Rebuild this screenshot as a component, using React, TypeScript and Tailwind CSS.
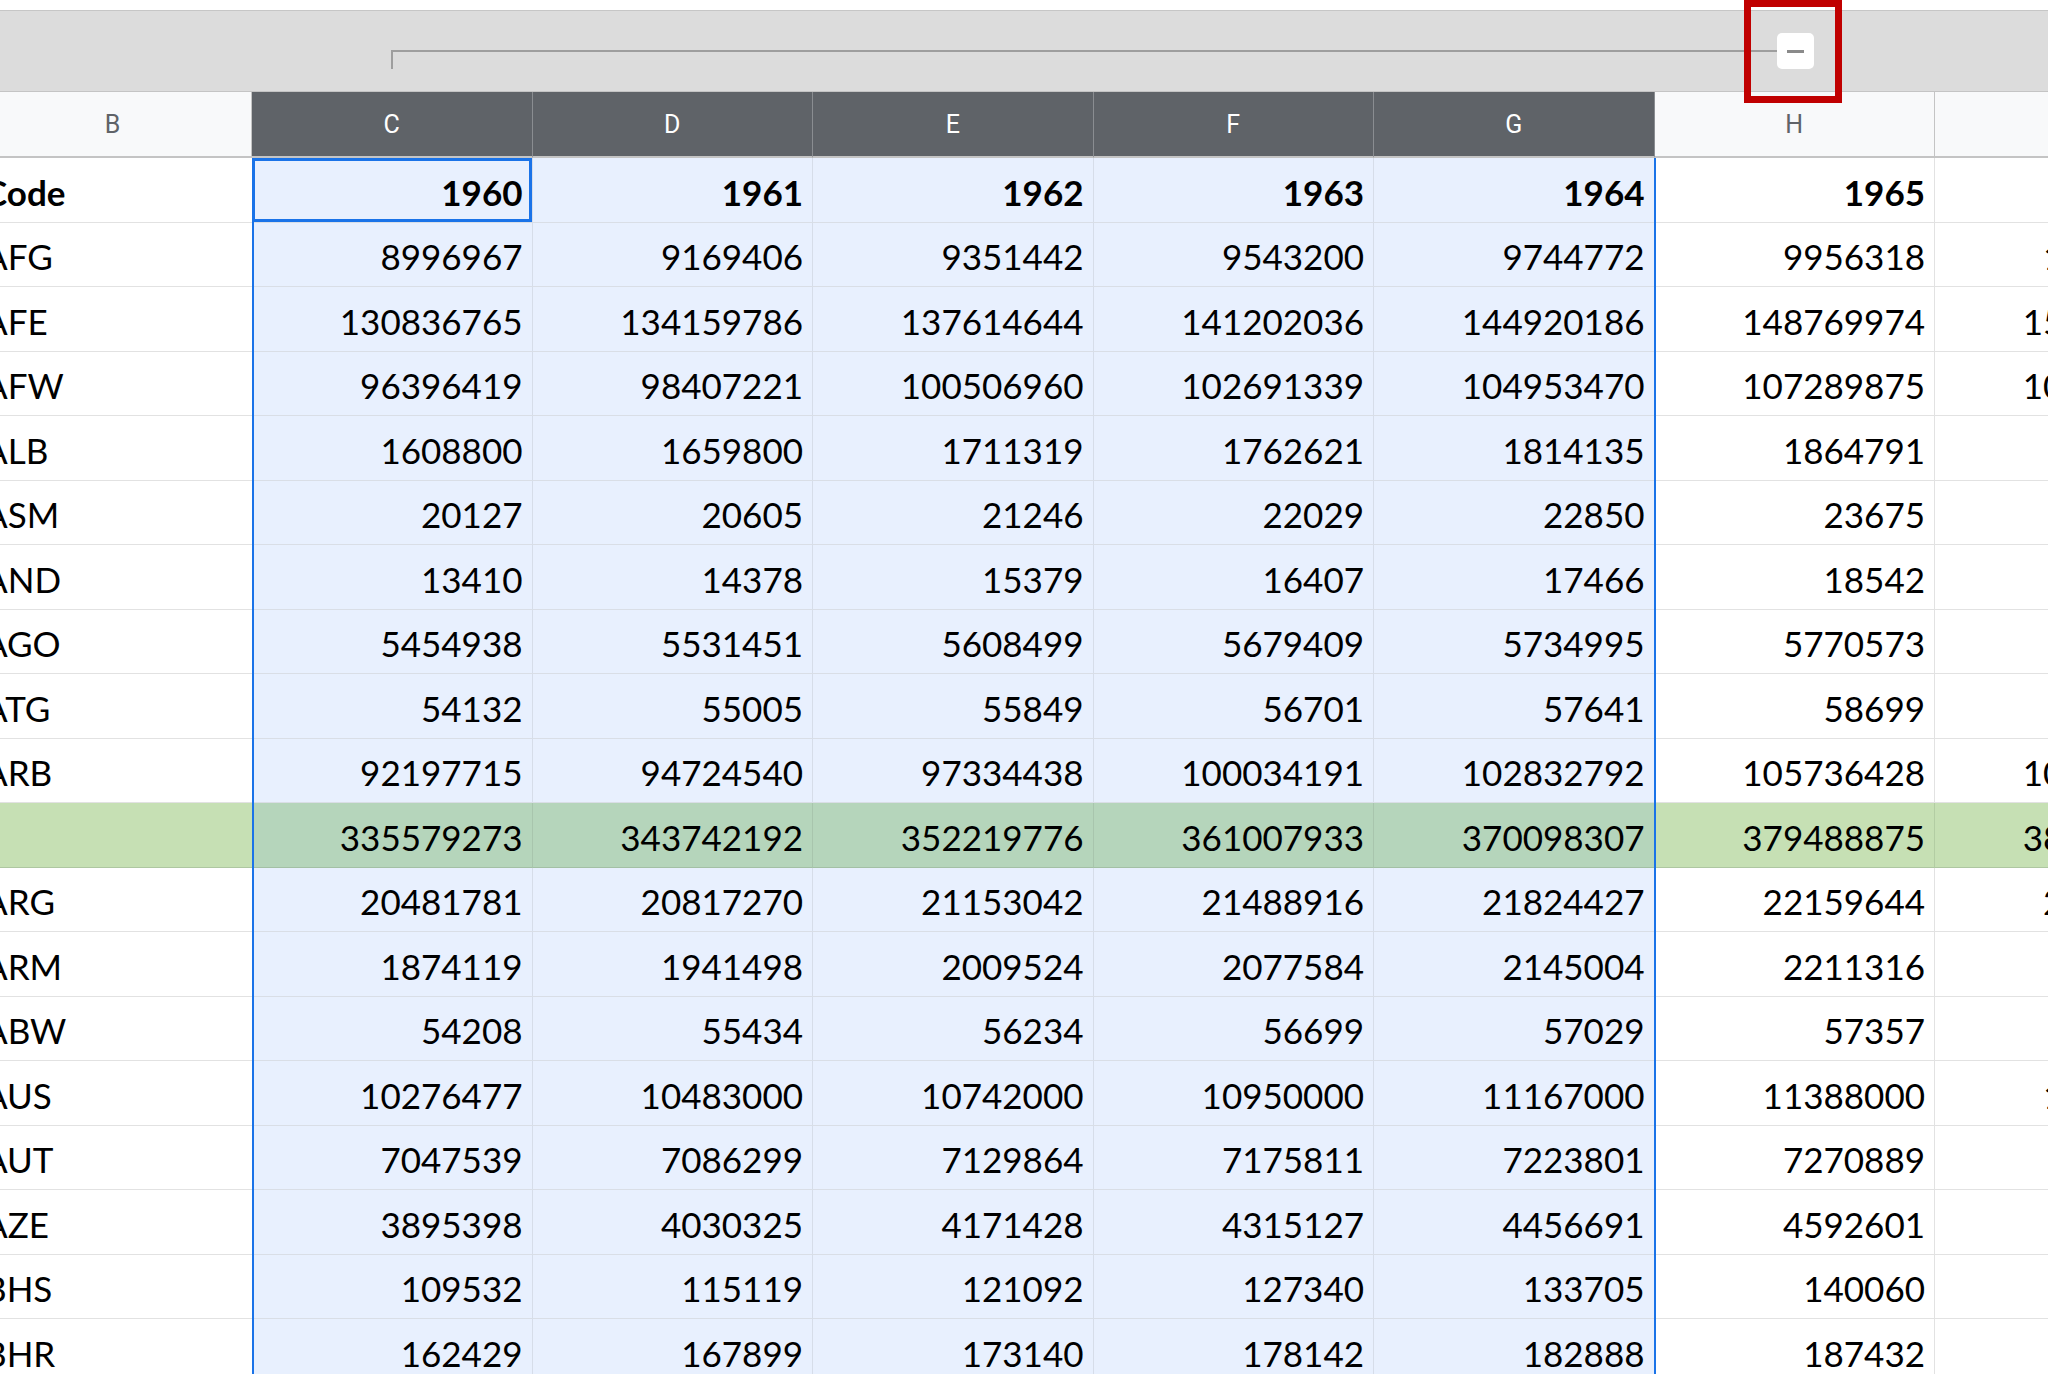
import React from "react";

type RowData = { code: string; vals: string[]; bold?: boolean; green?: boolean };

const rows: RowData[] = [
  { code: "Code", vals: ["1960", "1961", "1962", "1963", "1964", "1965", "1966"], bold: true },
  { code: "AFG", vals: ["8996967", "9169406", "9351442", "9543200", "9744772", "9956318", "10174840"] },
  { code: "AFE", vals: ["130836765", "134159786", "137614644", "141202036", "144920186", "148769974", "152752669"] },
  { code: "AFW", vals: ["96396419", "98407221", "100506960", "102691339", "104953470", "107289875", "109701811"] },
  { code: "ALB", vals: ["1608800", "1659800", "1711319", "1762621", "1814135", "1864791", "1914573"] },
  { code: "ASM", vals: ["20127", "20605", "21246", "22029", "22850", "23675", "24473"] },
  { code: "AND", vals: ["13410", "14378", "15379", "16407", "17466", "18542", "19646"] },
  { code: "AGO", vals: ["5454938", "5531451", "5608499", "5679409", "5734995", "5770573", "5781305"] },
  { code: "ATG", vals: ["54132", "55005", "55849", "56701", "57641", "58699", "59767"] },
  { code: "ARB", vals: ["92197715", "94724540", "97334438", "100034191", "102832792", "105736428", "108758606"] },
  { code: "", vals: ["335579273", "343742192", "352219776", "361007933", "370098307", "379488875", "388939121"], green: true },
  { code: "ARG", vals: ["20481781", "20817270", "21153042", "21488916", "21824427", "22159644", "22494254"] },
  { code: "ARM", vals: ["1874119", "1941498", "2009524", "2077584", "2145004", "2211316", "2276038"] },
  { code: "ABW", vals: ["54208", "55434", "56234", "56699", "57029", "57357", "57470"] },
  { code: "AUS", vals: ["10276477", "10483000", "10742000", "10950000", "11167000", "11388000", "11651000"] },
  { code: "AUT", vals: ["7047539", "7086299", "7129864", "7175811", "7223801", "7270889", "7322066"] },
  { code: "AZE", vals: ["3895398", "4030325", "4171428", "4315127", "4456691", "4592601", "4731058"] },
  { code: "BHS", vals: ["109532", "115119", "121092", "127340", "133705", "140060", "146428"] },
  { code: "BHR", vals: ["162429", "167899", "173140", "178142", "182888", "187432", "192029"] },
];

const letters = ["C", "D", "E", "F", "G", "H", "I"];

function HeaderRow() {
  return (
    <div className="flex h-[67px] shrink-0 -ml-[26px] border-t border-[#c4c4c4]">
      <div className="w-[278px] shrink-0 flex items-center justify-center pt-[2px] bg-[#f8f9fa] border-r border-b-2 border-r-[#c4c4c4] border-b-[#c4c4c4] text-[25px] text-[#5f6368] font-['Roboto',sans-serif]">
        B
      </div>
      {letters.map((l, i) => {
        const sel = i < 5;
        return (
          <div
            key={l}
            className={
              sel
                ? "w-[280.5px] shrink-0 flex items-center justify-center pt-[2px] bg-[#5f6368] border-r border-r-[#8a8d91] border-b-2 border-b-[#c4c4c4] text-[25px] text-white font-['Roboto',sans-serif]"
                : "w-[280.5px] shrink-0 flex items-center justify-center pt-[2px] bg-[#f8f9fa] border-r border-r-[#c4c4c4] border-b-2 border-b-[#c4c4c4] text-[25px] text-[#5f6368] font-['Roboto',sans-serif]"
            }
          >
            {l === "I" ? "" : l}
          </div>
        );
      })}
    </div>
  );
}

function DataRow({ r, first }: { r: RowData; first: boolean }) {
  const weight = r.bold ? "font-bold" : "font-normal";
  return (
    <div className="flex h-[64.5px] shrink-0 -ml-[26px] font-['Lato',sans-serif] text-[35px] text-black">
      <div
        className={
          r.green
            ? "w-[278px] shrink-0 flex items-center pl-[10px] pt-[4px] bg-[#c6e0b4] border-b border-b-[#aec7a1]"
            : "w-[278px] shrink-0 flex items-center pl-[10px] pt-[4px] bg-white border-b border-b-[#e2e2e2]"
        }
      >
        <span className={weight}>{r.code}</span>
      </div>
      {r.vals.map((v, i) => {
        const sel = i < 5;
        let cls = "w-[280.5px] shrink-0 relative flex items-center justify-end pr-[9px] pt-[4px] border-r border-b ";
        if (r.green) {
          cls += sel
            ? "bg-[#b5d5bb] border-r-[#a8c5ad] border-b-[#a3c0a5]"
            : "bg-[#c6e0b4] border-r-[#b3cda3] border-b-[#aec7a1]";
        } else {
          cls += sel
            ? "bg-[#e8f0fe] border-r-[#d6dde9] border-b-[#d9dee6]"
            : "bg-white border-r-[#e2e2e2] border-b-[#e2e2e2]";
        }
        return (
          <div key={i} className={cls}>
            {first && i === 0 && (
              <div className="absolute left-0 top-0 right-0 bottom-0 border-[3px] border-[#1a73e8]" />
            )}
            <span className={weight}>{v}</span>
          </div>
        );
      })}
    </div>
  );
}

export default function App() {
  return (
    <div className="relative w-[2048px] h-[1374px] overflow-hidden bg-white">
      <div className="h-[10px] bg-white" />
      <div className="relative h-[81px] bg-[#dcdcdc] border-t border-[#c6c6c6]">
        <svg className="absolute left-0 top-0" width="2048" height="81" viewBox="0 0 2048 81">
          <line x1="392" y1="40" x2="1777" y2="40" stroke="#9e9e9e" strokeWidth="2" />
          <line x1="392" y1="39" x2="392" y2="58" stroke="#9e9e9e" strokeWidth="2" />
        </svg>
        <div className="absolute left-[1777px] top-[22px] w-[37px] h-[36px] bg-white rounded-[5px] flex items-center justify-center">
          <div className="w-[17px] h-[3px] bg-[#8a8a8a]" />
        </div>
      </div>
      <HeaderRow />
      <div className="relative">
        {rows.map((r, idx) => (
          <DataRow key={idx} r={r} first={idx === 0} />
        ))}
        <div className="absolute left-[252px] top-0 bottom-0 w-[2px] bg-[#1a73e8]" />
        <div className="absolute left-[1654px] top-0 bottom-0 w-[2px] bg-[#1a73e8]" />
      </div>
      <div className="absolute left-[1744px] top-0 w-[98px] h-[103px] border-[7px] border-[#c00000]" />
    </div>
  );
}
